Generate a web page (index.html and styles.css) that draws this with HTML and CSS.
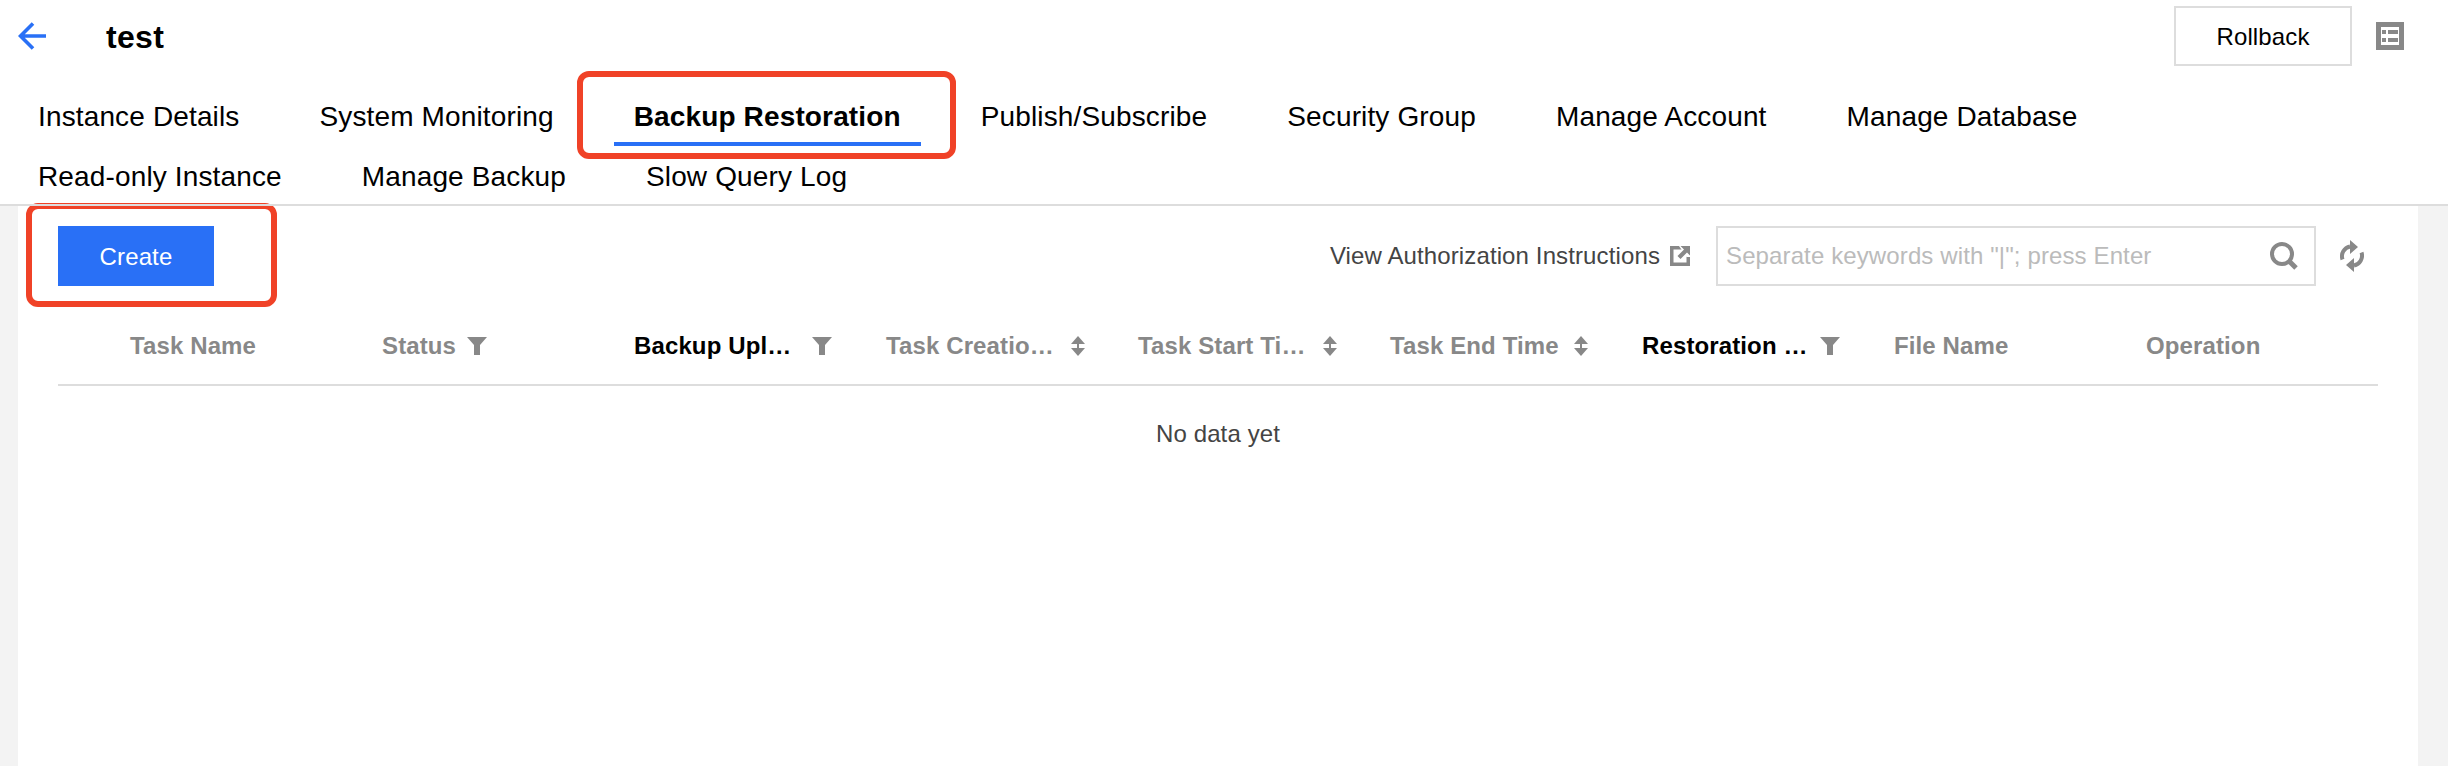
FILE: index.html
```html
<!DOCTYPE html>
<html lang="en">
<head>
<meta charset="utf-8">
<title>test</title>
<link rel="stylesheet" href="styles.css">
</head>
<body>
<header class="topbar">
  <svg class="back" viewBox="0 0 28 28" width="28" height="28"><path d="M28 14H2M15 1.5 2.5 14 15 26.5" fill="none" stroke="#2970f6" stroke-width="3.6"/></svg>
  <h1 class="title">test</h1>
  <button class="btn-plain">Rollback</button>
  <svg class="list-icon" viewBox="0 0 28 28" width="28" height="28"><path fill-rule="evenodd" fill="#888" d="M0 0h28v28H0zM5 5v18h18V5z"/><path fill="#888" d="M6 8h4v4H6zM12 8h10v4H12zM6 16h4v4H6zM12 16h10v4H12z"/></svg>
</header>
<nav class="tabs">
  <a class="tab">Instance Details</a>
  <a class="tab">System Monitoring</a>
  <a class="tab active">Backup Restoration<span class="mark mark-tab"></span></a>
  <a class="tab">Publish/Subscribe</a>
  <a class="tab">Security Group</a>
  <a class="tab">Manage Account</a>
  <a class="tab">Manage Database</a>
  <a class="tab">Read-only Instance</a>
  <a class="tab">Manage Backup</a>
  <a class="tab">Slow Query Log</a>
</nav>
<main class="page">
  <section class="panel">
    <div class="toolbar">
      <button class="btn-primary">Create<span class="mark mark-btn"></span></button>
      <div class="tools">
        <a class="link">View Authorization Instructions</a>
        <svg class="ext" viewBox="0 0 20 20" width="20" height="20"><path fill-rule="evenodd" fill="#888" d="M0 0h20v20H0zM3.500 3.500v13h13v-13z"/><path fill="#fff" d="M9 0h11v11h-3.500z"/><path fill="#888" d="M10.500 0H20v9.500l-3-3-6.500 6.500-3-3L14 3.500z"/></svg>
        <div class="search">
          <input class="search-input" type="text" placeholder="Separate keywords with &quot;|&quot;; press Enter">
          <svg viewBox="0 0 28 28" width="28" height="28"><circle cx="12" cy="12" r="10" fill="none" stroke="#888" stroke-width="4"/><path d="m18 18 8 8" stroke="#888" stroke-width="5"/></svg>
        </div>
        <svg class="refresh" viewBox="0 0 24 32" width="24" height="32"><path fill="none" stroke="#888" stroke-width="4" d="M2.500 19.500A10 10 0 0 1 10 6.500M21.500 12.500A10 10 0 0 1 14 25.500"/><path fill="#888" d="M10 0l8 7-8 7zM14 32l-8-7 8-7z"/></svg>
      </div>
    </div>
    <div class="thead">
      <div class="th">Task Name</div>
      <div class="th">Status<svg class="gap-filter" viewBox="0 0 20 18" width="20" height="18"><path fill="#888" d="M0 0h20l-7 8v10H7V8z"/></svg></div>
      <div class="th on"><span class="clip">Backup Upl…</span><svg viewBox="0 0 20 18" width="20" height="18"><path fill="#888" d="M0 0h20l-7 8v10H7V8z"/></svg></div>
      <div class="th"><span class="clip clip-wide">Task Creatio…</span><svg viewBox="0 0 16 20" width="16" height="20"><path fill="#888" d="M8 0l7 8H1zM7 8h2v4H7zM1 12h14l-7 8z"/></svg></div>
      <div class="th"><span class="clip clip-wide">Task Start Ti…</span><svg viewBox="0 0 16 20" width="16" height="20"><path fill="#888" d="M8 0l7 8H1zM7 8h2v4H7zM1 12h14l-7 8z"/></svg></div>
      <div class="th">Task End Time<svg class="gap-sort" viewBox="0 0 16 20" width="16" height="20"><path fill="#888" d="M8 0l7 8H1zM7 8h2v4H7zM1 12h14l-7 8z"/></svg></div>
      <div class="th on"><span class="clip">Restoration …</span><svg viewBox="0 0 20 18" width="20" height="18"><path fill="#888" d="M0 0h20l-7 8v10H7V8z"/></svg></div>
      <div class="th">File Name</div>
      <div class="th">Operation</div>
    </div>
    <div class="empty">No data yet</div>
  </section>
</main>
</body>
</html>
```
FILE: styles.css
```css
* { box-sizing: border-box; }
html, body { height: 100%; }
body {
  margin: 0;
  display: flex;
  flex-direction: column;
  overflow: hidden;
  background: #fff;
  color: #000;
  font-family: "Liberation Sans", Arial, sans-serif;
  font-size: 24px;
  letter-spacing: 0.12px;
}
.topbar {
  display: flex;
  align-items: center;
  height: 84px;
  padding: 6px 44px 18px 18px;
}
.back { flex: none; }
.title { margin: 2px auto 0 60px; font-size: 32px; font-weight: 700; letter-spacing: 0.3px; }
.btn-plain {
  width: 178px;
  height: 60px;
  padding: 2px 0 0;
  border: 2px solid #ddd;
  background: #fff;
  font: inherit;
  letter-spacing: inherit;
  color: #000;
}
.list-icon { margin-left: 24px; }
.tabs {
  position: relative;
  z-index: 2;
  display: flex;
  flex-wrap: wrap;
  align-content: flex-start;
  column-gap: 40px;
  height: 122px;
  padding: 2px 200px 0 18px;
  border-bottom: 2px solid #ddd;
  font-size: 28px;
  letter-spacing: 0.14px;
}
.tab {
  position: relative;
  height: 60px;
  line-height: 62px;
  padding: 0 20px;
}
.tab.active {
  font-weight: 700;
  box-shadow: inset 0 -4px 0 #2970f6;
}
.mark {
  position: absolute;
  border: 6px solid #f04227;
  border-radius: 12px;
  pointer-events: none;
}
.mark-tab { left: -37px; right: -35px; top: -15px; bottom: -13px; }
.mark-btn { left: -32px; right: -63px; top: -23px; bottom: -21px; }
.page {
  flex: 1;
  display: flex;
  padding: 0 30px 0 18px;
  background: #f3f3f3;
}
.panel {
  flex: 1;
  padding: 20px 40px 0;
  background: #fff;
}
.toolbar {
  display: flex;
  align-items: center;
  justify-content: space-between;
  padding-right: 14px;
}
.btn-primary {
  position: relative;
  width: 156px;
  height: 60px;
  padding: 2px 0 0;
  border: 0;
  background: #2970f6;
  color: #fff;
  font: inherit;
  letter-spacing: inherit;
}
.tools { display: flex; align-items: center; }
.link { color: #444; }
.ext { margin: 0 26px 0 10px; }
.search {
  display: flex;
  align-items: center;
  width: 600px;
  height: 60px;
  padding: 0 16px 0 8px;
  border: 2px solid #ddd;
}
.search-input {
  flex: 1;
  min-width: 0;
  border: 0;
  outline: 0;
  padding: 0;
  background: none;
  font: inherit;
  letter-spacing: inherit;
  color: #444;
}
.search-input::placeholder { color: #bbb; opacity: 1; }
.refresh { margin-left: 24px; }
.thead {
  display: grid;
  grid-template-columns: repeat(8, 252px) 1fr;
  align-items: center;
  height: 78px;
  margin-top: 22px;
  padding-left: 72px;
  border-bottom: 2px solid #ddd;
  color: #888;
  font-weight: 700;
}
.th { display: flex; align-items: center; white-space: nowrap; }
.th.on { color: #000; }
.th svg { flex: none; }
.clip { width: 178px; }
.clip-wide { width: 184px; }
.gap-filter { margin-left: 11px; }
.gap-sort { margin-left: 14px; }
.empty {
  height: 96px;
  line-height: 96px;
  text-align: center;
  color: #444;
}
```
